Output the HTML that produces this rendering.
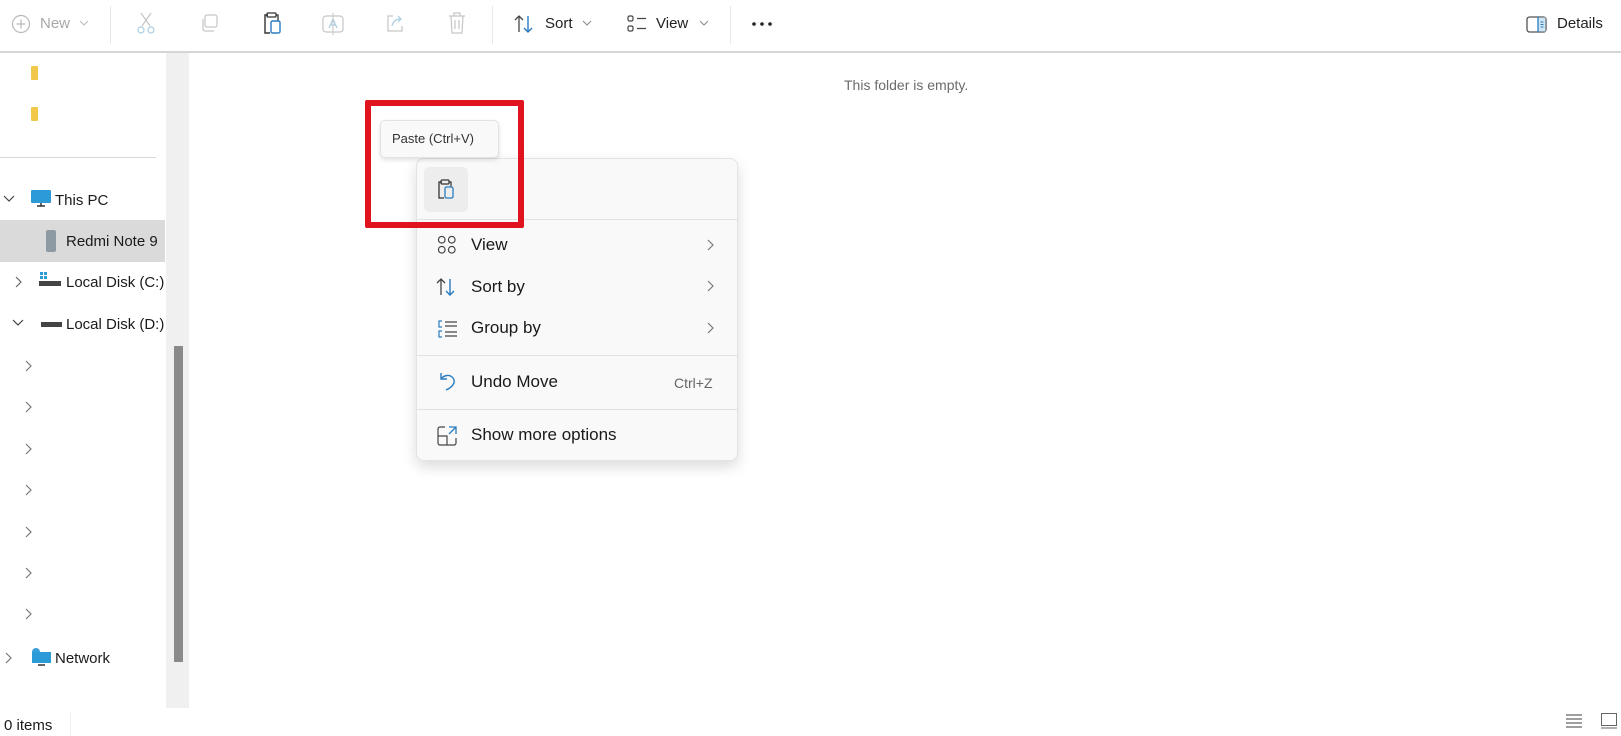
<!DOCTYPE html>
<html><head><meta charset="utf-8"><style>
*{margin:0;padding:0;box-sizing:border-box}
body{width:1621px;height:736px;background:#fff;font-family:"Liberation Sans",sans-serif;position:relative;overflow:hidden;color:#1a1a1a}
.a{position:absolute}
.t{position:absolute;white-space:nowrap}
svg{position:absolute;overflow:visible}
</style></head><body>
<!-- toolbar -->
<div class="a" style="left:0;top:51px;width:1621px;height:2px;background:#d6d6d6"></div>
<svg style="left:11px;top:14px" width="20" height="20"><circle cx="10" cy="10" r="8.5" fill="none" stroke="#b8b8b8" stroke-width="1.2"/><path d="M10 5.5v9M5.5 10h9" stroke="#b8b8b8" stroke-width="1.2"/></svg>
<div class="t" style="left:40px;top:15px;font-size:15px;color:#a8a8a8">New</div>
<svg style="left:80px;top:21px" width="8" height="5"><path d="M0 0l4 4 4-4" fill="none" stroke="#b8b8b8"/></svg>
<div class="a" style="left:110px;top:6px;width:1px;height:38px;background:#e8e8e8"></div>
<svg style="left:136px;top:13px" width="20" height="22"><path d="M5 0l9 13M15 0l-9 13" stroke="#c6c6c6" fill="none" stroke-width="1.2"/><circle cx="5" cy="17" r="3" fill="none" stroke="#a9cde0" stroke-width="1.2"/><circle cx="15" cy="17" r="3" fill="none" stroke="#a9cde0" stroke-width="1.2"/></svg>
<svg style="left:200px;top:14px" width="20" height="20"><rect x="5" y="1" width="12" height="12" rx="2" fill="none" stroke="#c6c6c6" stroke-width="1.2"/><path d="M3 5v10a2 2 0 0 0 2 2h9" fill="none" stroke="#c6c6c6" stroke-width="1.2"/></svg>
<svg style="left:262px;top:12px" width="20" height="24"><path d="M6 3H3v18h5" fill="none" stroke="#333" stroke-width="1.4"/><rect x="5" y="1" width="9" height="4" rx="1" fill="none" stroke="#333" stroke-width="1.3"/><path d="M14 3h2v6" fill="none" stroke="#333" stroke-width="1.3"/><rect x="9" y="9" width="9" height="12" rx="1.5" fill="none" stroke="#2a7cc0" stroke-width="1.4"/></svg>
<svg style="left:322px;top:13px" width="22" height="22"><rect x="1" y="3" width="20" height="16" rx="3" fill="none" stroke="#c6c6c6" stroke-width="1.2"/><path d="M7 15l4-9 4 9M8.5 12h5" fill="none" stroke="#a9cde0" stroke-width="1.2"/><path d="M11 0v22" stroke="#c6c6c6" stroke-width="1"/></svg>
<svg style="left:385px;top:13px" width="20" height="20"><path d="M8 3H3v15h14v-5" fill="none" stroke="#c6c6c6" stroke-width="1.2"/><path d="M7 13c1-5 4-7 9-7M13 3l3 3-3 3" fill="none" stroke="#a9cde0" stroke-width="1.2"/></svg>
<svg style="left:448px;top:12px" width="18" height="22"><path d="M1 4h16M6 4V1h6v3M3 4l1 17h10l1-17M7 8v9M11 8v9" fill="none" stroke="#c6c6c6" stroke-width="1.2"/></svg>
<div class="a" style="left:492px;top:6px;width:1px;height:38px;background:#e8e8e8"></div>
<svg style="left:514px;top:14px" width="20" height="20"><path d="M5 18V2M1 6l4-4 4 4" fill="none" stroke="#444" stroke-width="1.3"/><path d="M14 2v16M10 14l4 4 4-4" fill="none" stroke="#2a7cc0" stroke-width="1.4"/></svg>
<div class="t" style="left:545px;top:15px;font-size:15px;color:#222">Sort</div>
<svg style="left:583px;top:21px" width="8" height="5"><path d="M0 0l4 4 4-4" fill="none" stroke="#888"/></svg>
<svg style="left:627px;top:15px" width="20" height="18"><rect x="1" y="1" width="5" height="5" rx="1.5" fill="none" stroke="#444" stroke-width="1.2"/><rect x="1" y="11" width="5" height="5" rx="1.5" fill="none" stroke="#444" stroke-width="1.2"/><path d="M10 3.5h9M10 13.5h9" stroke="#444" stroke-width="1.3"/></svg>
<div class="t" style="left:656px;top:15px;font-size:15px;color:#222">View</div>
<svg style="left:700px;top:21px" width="8" height="5"><path d="M0 0l4 4 4-4" fill="none" stroke="#888"/></svg>
<div class="a" style="left:730px;top:6px;width:1px;height:38px;background:#e8e8e8"></div>
<svg style="left:752px;top:22px" width="22" height="4"><circle cx="2" cy="2" r="1.8" fill="#222"/><circle cx="10" cy="2" r="1.8" fill="#222"/><circle cx="18" cy="2" r="1.8" fill="#222"/></svg>
<svg style="left:1526px;top:16px" width="22" height="17"><rect x="1" y="1" width="19" height="15" rx="2.5" fill="none" stroke="#555" stroke-width="1.3"/><rect x="12" y="1.5" width="7.5" height="14" fill="#cfe6f6"/><path d="M12 1v15" stroke="#2a7cc0" stroke-width="1.3"/><path d="M14.5 6h3M14.5 8.5h3M14.5 11h3" stroke="#2a7cc0" stroke-width="1"/></svg>
<div class="t" style="left:1557px;top:15px;font-size:15px;color:#222">Details</div>

<!-- sidebar -->
<div class="a" style="left:166px;top:53px;width:23px;height:655px;background:#f0f0f0"></div>
<div class="a" style="left:174px;top:346px;width:9px;height:316px;background:#8a8a8a"></div>
<div class="a" style="left:31px;top:66px;width:7px;height:14px;background:#f2c84b;border-radius:1px"></div>
<div class="a" style="left:31px;top:107px;width:7px;height:14px;background:#f2c84b;border-radius:1px"></div>
<div class="a" style="left:0;top:157px;width:156px;height:1px;background:#d8d8d8"></div>
<div class="a" style="left:0;top:220px;width:165px;height:42px;background:#dadada"></div>
<svg style="left:4px;top:196px" width="10" height="6"><path d="M0 0l5 5 5-5" fill="none" stroke="#444" stroke-width="1.2"/></svg>
<svg style="left:31px;top:190px" width="20" height="18"><rect x="0" y="0" width="20" height="13" rx="1" fill="#2b9ad6"/><path d="M6 16h8M10 13v3" stroke="#333" stroke-width="1.5"/></svg>
<div class="t" style="left:55px;top:192px;font-size:15px">This PC</div>
<div class="a" style="left:46px;top:230px;width:10px;height:22px;background:#8e9aa3;border-radius:2px"></div>
<div class="t" style="left:66px;top:233px;font-size:15px">Redmi Note 9</div>
<svg style="left:16px;top:277px" width="6" height="10"><path d="M0 0l5 5-5 5" fill="none" stroke="#666" stroke-width="1.2"/></svg>
<svg style="left:39px;top:272px" width="22" height="15"><rect x="1" y="0" width="3" height="3" fill="#2b9ad6"/><rect x="5" y="0" width="3" height="3" fill="#2b9ad6"/><rect x="1" y="4" width="3" height="3" fill="#2b9ad6"/><rect x="5" y="4" width="3" height="3" fill="#2b9ad6"/><rect x="0" y="9" width="22" height="5" fill="#444"/></svg>
<div class="t" style="left:66px;top:274px;font-size:15px">Local Disk (C:)</div>
<svg style="left:13px;top:320px" width="10" height="6"><path d="M0 0l5 5 5-5" fill="none" stroke="#444" stroke-width="1.2"/></svg>
<div class="a" style="left:41px;top:322px;width:21px;height:5px;background:#444"></div>
<div class="t" style="left:66px;top:316px;font-size:15px">Local Disk (D:)</div>
<svg style="left:26px;top:361px" width="6" height="220"><g fill="none" stroke="#777" stroke-width="1.2"><path d="M0 0l5 5-5 5"/><path d="M0 41l5 5-5 5"/><path d="M0 83l5 5-5 5"/><path d="M0 124l5 5-5 5"/><path d="M0 166l5 5-5 5"/><path d="M0 207l5 5-5 5"/></g></svg>
<svg style="left:26px;top:609px" width="6" height="10"><path d="M0 0l5 5-5 5" fill="none" stroke="#777" stroke-width="1.2"/></svg>
<svg style="left:6px;top:653px" width="6" height="10"><path d="M0 0l5 5-5 5" fill="none" stroke="#777" stroke-width="1.2"/></svg>
<svg style="left:30px;top:647px" width="22" height="20"><circle cx="6" cy="5" r="4" fill="#3a9fd8"/><rect x="2" y="5" width="19" height="11" fill="#2b9ad6"/><path d="M8 18h7" stroke="#333" stroke-width="1.5"/></svg>
<div class="t" style="left:55px;top:650px;font-size:15px">Network</div>

<!-- status -->
<div class="a" style="left:70px;top:712px;width:1px;height:24px;background:#eee"></div>
<div class="t" style="left:4px;top:717px;font-size:15px">0 items</div>
<svg style="left:1566px;top:714px" width="16" height="14"><path d="M0 1h16M0 5h16M0 9h16M0 13h16" stroke="#666" stroke-width="1.2"/></svg>
<svg style="left:1601px;top:713px" width="16" height="16"><rect x="0.5" y="0.5" width="15" height="12" fill="none" stroke="#666"/><path d="M0 15h16" stroke="#666"/></svg>

<div class="t" style="left:844px;top:77px;font-size:14px;color:#6b6b6b">This folder is empty.</div>

<!-- context menu -->
<div class="a" style="left:416px;top:158px;width:322px;height:303px;background:#f9f9f9;border:1px solid #e3e3e3;border-radius:8px;box-shadow:0 6px 14px rgba(0,0,0,.14)"></div>
<div class="a" style="left:424px;top:167px;width:44px;height:45px;background:#ededed;border-radius:5px"></div>
<svg style="left:437px;top:179px" width="20" height="22"><path d="M5 3H2v16h5" fill="none" stroke="#333" stroke-width="1.3"/><rect x="4" y="1" width="8" height="4" rx="1" fill="none" stroke="#333" stroke-width="1.2"/><path d="M12 3h2v5" fill="none" stroke="#333" stroke-width="1.2"/><rect x="8" y="8" width="8" height="11" rx="1.5" fill="none" stroke="#2a7cc0" stroke-width="1.3"/></svg>
<div class="a" style="left:417px;top:219px;width:320px;height:1px;background:#e2e2e2"></div>
<svg style="left:438px;top:236px" width="18" height="18"><g fill="none" stroke="#444" stroke-width="1.2"><rect x="0.5" y="0.5" width="6.5" height="6.5" rx="3"/><rect x="10.5" y="0.5" width="6.5" height="6.5" rx="3"/><rect x="0.5" y="10.5" width="6.5" height="6.5" rx="3"/><rect x="10.5" y="10.5" width="6.5" height="6.5" rx="3"/></g></svg>
<div class="t" style="left:471px;top:235px;font-size:17px">View</div>
<svg style="left:436px;top:278px" width="20" height="18"><path d="M5 17V1M1 5l4-4 4 4" fill="none" stroke="#444" stroke-width="1.3"/><path d="M14 1v16M10 13l4 4 4-4" fill="none" stroke="#2a7cc0" stroke-width="1.4"/></svg>
<div class="t" style="left:471px;top:277px;font-size:17px">Sort by</div>
<svg style="left:438px;top:320px" width="20" height="18"><path d="M4 1H1v6h3M4 11H1v6h3" fill="none" stroke="#2a7cc0" stroke-width="1.2"/><path d="M7 2h12M7 6h12M7 12h12M7 16h12" stroke="#444" stroke-width="1.2"/></svg>
<div class="t" style="left:471px;top:318px;font-size:17px">Group by</div>
<svg style="left:708px;top:240px" width="6" height="100"><g fill="none" stroke="#777" stroke-width="1.2"><path d="M0 0l5 5-5 5"/><path d="M0 41l5 5-5 5"/><path d="M0 83l5 5-5 5"/></g></svg>
<div class="a" style="left:417px;top:355px;width:320px;height:1px;background:#e2e2e2"></div>
<svg style="left:438px;top:372px" width="18" height="20"><path d="M3 1v6h6" fill="none" stroke="#2a7cc0" stroke-width="1.4"/><path d="M3 7c3-4 9-5 12-1 3 4 0 9-7 12" fill="none" stroke="#2a7cc0" stroke-width="1.4"/></svg>
<div class="t" style="left:471px;top:372px;font-size:17px">Undo Move</div>
<div class="t" style="left:674px;top:375px;font-size:14px;color:#666">Ctrl+Z</div>
<div class="a" style="left:417px;top:409px;width:320px;height:1px;background:#e2e2e2"></div>
<svg style="left:437px;top:426px" width="20" height="20"><path d="M8 1H3a2 2 0 0 0-2 2v14a2 2 0 0 0 2 2h14a2 2 0 0 0 2-2v-5M1 10h9v9" fill="none" stroke="#444" stroke-width="1.2"/><path d="M12 1h7v7M19 1l-7 7" fill="none" stroke="#2a7cc0" stroke-width="1.3"/></svg>
<div class="t" style="left:471px;top:425px;font-size:17px">Show more options</div>

<!-- tooltip -->
<div class="a" style="left:380px;top:120px;width:119px;height:38px;background:#f9f9f9;border:1px solid #e2e2e2;border-radius:5px;box-shadow:0 2px 5px rgba(0,0,0,.12)"></div>
<div class="t" style="left:392px;top:131px;font-size:13px;color:#333">Paste (Ctrl+V)</div>
<!-- red box -->
<div class="a" style="left:365px;top:100px;width:159px;height:128px;border:6px solid #e0141e;border-radius:2px"></div>
</body></html>
